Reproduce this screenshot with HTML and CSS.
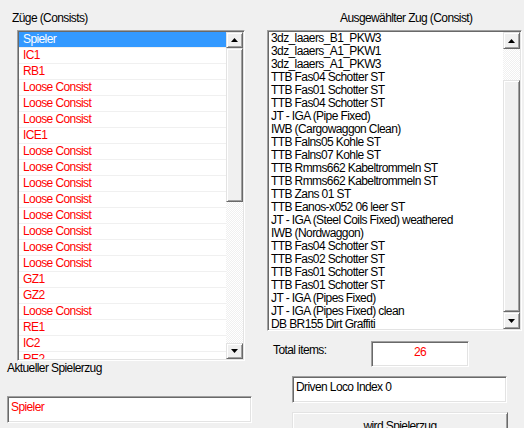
FILE: index.html
```html
<!DOCTYPE html>
<html>
<head>
	<meta charset="UTF-8">
	<title>Consists</title>
	<link rel="stylesheet" href="styles.css">
</head>
<body>
	<div class="dialog">
		<div class="col-left">
			<div class="label label-trains">Züge (Consists)</div>
			<div class="listbox listbox-left">
				<div class="items items-left">
					<div class="row selected">Spieler</div>
					<div class="row">IC1</div>
					<div class="row">RB1</div>
					<div class="row">Loose Consist</div>
					<div class="row">Loose Consist</div>
					<div class="row">Loose Consist</div>
					<div class="row">ICE1</div>
					<div class="row">Loose Consist</div>
					<div class="row">Loose Consist</div>
					<div class="row">Loose Consist</div>
					<div class="row">Loose Consist</div>
					<div class="row">Loose Consist</div>
					<div class="row">Loose Consist</div>
					<div class="row">Loose Consist</div>
					<div class="row">Loose Consist</div>
					<div class="row">GZ1</div>
					<div class="row">GZ2</div>
					<div class="row">Loose Consist</div>
					<div class="row">RE1</div>
					<div class="row">IC2</div>
					<div class="row">RE2</div>
				</div>
				<div class="scrollbar scrollbar-left">
					<div class="sb-btn"><svg width="7" height="4" viewBox="0 0 7 4"><path d="M3.5 0L7 4H0z" fill="#000"/></svg></div>
					<div class="sb-thumb"></div>
					<div class="sb-track"></div>
					<div class="sb-btn"><svg width="7" height="4" viewBox="0 0 7 4"><path d="M0 0H7L3.5 4z" fill="#000"/></svg></div>
				</div>
			</div>
			<div class="label label-current">Aktueller Spielerzug</div>
			<div class="textbox textbox-player">Spieler</div>
		</div>

		<div class="col-right">
			<div class="label label-selected">Ausgewählter Zug (Consist)</div>
			<div class="listbox listbox-right">
				<div class="items items-right">
					<div class="row">3dz_laaers_B1_PKW3</div>
					<div class="row">3dz_laaers_A1_PKW1</div>
					<div class="row">3dz_laaers_A1_PKW3</div>
					<div class="row">TTB Fas04 Schotter ST</div>
					<div class="row">TTB Fas01 Schotter ST</div>
					<div class="row">TTB Fas04 Schotter ST</div>
					<div class="row">JT - IGA (Pipe Fixed)</div>
					<div class="row">IWB (Cargowaggon Clean)</div>
					<div class="row">TTB Falns05 Kohle ST</div>
					<div class="row">TTB Falns07 Kohle ST</div>
					<div class="row">TTB Rmms662 Kabeltrommeln ST</div>
					<div class="row">TTB Rmms662 Kabeltrommeln ST</div>
					<div class="row">TTB Zans 01 ST</div>
					<div class="row">TTB Eanos-x052 06 leer ST</div>
					<div class="row">JT - IGA (Steel Coils Fixed) weathered</div>
					<div class="row">IWB (Nordwaggon)</div>
					<div class="row">TTB Fas04 Schotter ST</div>
					<div class="row">TTB Fas02 Schotter ST</div>
					<div class="row">TTB Fas01 Schotter ST</div>
					<div class="row">TTB Fas01 Schotter ST</div>
					<div class="row">JT - IGA (Pipes Fixed)</div>
					<div class="row">JT - IGA (Pipes Fixed) clean</div>
					<div class="row">DB BR155 Dirt Graffiti</div>
				</div>
				<div class="scrollbar scrollbar-right">
					<div class="sb-btn"><svg width="7" height="4" viewBox="0 0 7 4"><path d="M3.5 0L7 4H0z" fill="#000"/></svg></div>
					<div class="sb-track"></div>
					<div class="sb-thumb"></div>
					<div class="sb-btn"><svg width="7" height="4" viewBox="0 0 7 4"><path d="M0 0H7L3.5 4z" fill="#000"/></svg></div>
				</div>
			</div>
			<div class="total-row">
				<div class="label label-total">Total items:</div>
				<div class="textbox textbox-total">26</div>
			</div>
			<div class="textbox textbox-loco">Driven Loco Index 0</div>
			<div class="button">wird Spielerzug</div>
		</div>
	</div>
</body>
</html>
```

FILE: styles.css
```css
body {
	margin: 0;
	padding: 0;
	width: 524px;
	height: 428px;
	overflow: hidden;
	background-color: #f0f0f0;
	font-family: "Liberation Sans", Arial, sans-serif;
	font-size: 12px;
	letter-spacing: -0.6px;
	color: #000;
}

.dialog {
	display: flex;
}

.col-left {
	width: 260px;
}

.col-right {
	width: 264px;
}

.label {
	line-height: 14px;
	white-space: nowrap;
}

.label-trains {
	padding: 11px 0 5px 12px;
}

.label-selected {
	padding: 11px 0 5px 80px;
}

.label-current {
	margin-left: 7px;
}

/* sunken 3d border, windows classic */
.listbox,
.textbox {
	box-sizing: border-box;
	border: 1px solid;
	border-color: #a0a0a0 #fff #fff #a0a0a0;
	box-shadow: inset 1px 1px #696969, inset -1px -1px #e3e3e3;
	background-color: #fff;
}

.listbox {
	display: flex;
	padding: 1px;
}

.listbox-left {
	margin-left: 17px;
	width: 228px;
	height: 331px;
}

.listbox-right {
	margin-left: 7px;
	width: 255px;
	height: 301px;
}

.items {
	flex: 1;
	overflow: hidden;
	color: #f00;
}

.items-left .row {
	height: 15px;
	line-height: 15px;
	padding-left: 4px;
	border-bottom: 1px solid #f0f0f0;
	white-space: nowrap;
}

.items-left .selected {
	background-color: #3399ff;
	color: #fff;
}

.items-right {
	color: #000;
}

.items-right .row {
	height: 13px;
	line-height: 13px;
	padding-left: 2px;
	white-space: nowrap;
}

.scrollbar {
	width: 17px;
	display: grid;
}

.scrollbar-left {
	grid-template-rows: 16px 154px 1fr 16px;
}

.scrollbar-right {
	grid-template-rows: 17px 31px 1fr 17px;
}

.sb-btn,
.sb-thumb,
.button {
	box-sizing: border-box;
	background-color: #f0f0f0;
	border: 1px solid;
	border-color: #e3e3e3 #696969 #696969 #e3e3e3;
	box-shadow: inset 1px 1px #fff, inset -1px -1px #a0a0a0;
}

.sb-btn {
	display: flex;
	align-items: center;
	justify-content: center;
}

.sb-btn svg {
	display: block;
}

.sb-track {
	background: repeating-conic-gradient(#f0f0f0 0 25%, #fff 0 50%) 0 0 / 2px 2px;
}

.textbox-player {
	margin: 21px 0 0 7px;
	width: 245px;
	height: 27px;
	padding: 3px 3px;
	color: #f00;
	line-height: 14px;
}

.total-row {
	display: flex;
	margin-top: 10px;
}

.label-total {
	margin: 2px 0 0 13px;
	width: 98px;
}

.textbox-total {
	width: 98px;
	height: 26px;
	padding-top: 3px;
	text-align: center;
	color: #f00;
	line-height: 14px;
}

.textbox-loco {
	margin: 9px 0 0 32px;
	width: 215px;
	height: 27px;
	padding: 3px 3px;
	line-height: 14px;
}

.button {
	margin: 9px 0 0 32px;
	width: 216px;
	height: 26px;
	padding-top: 6px;
	text-align: center;
	line-height: 14px;
}
```
